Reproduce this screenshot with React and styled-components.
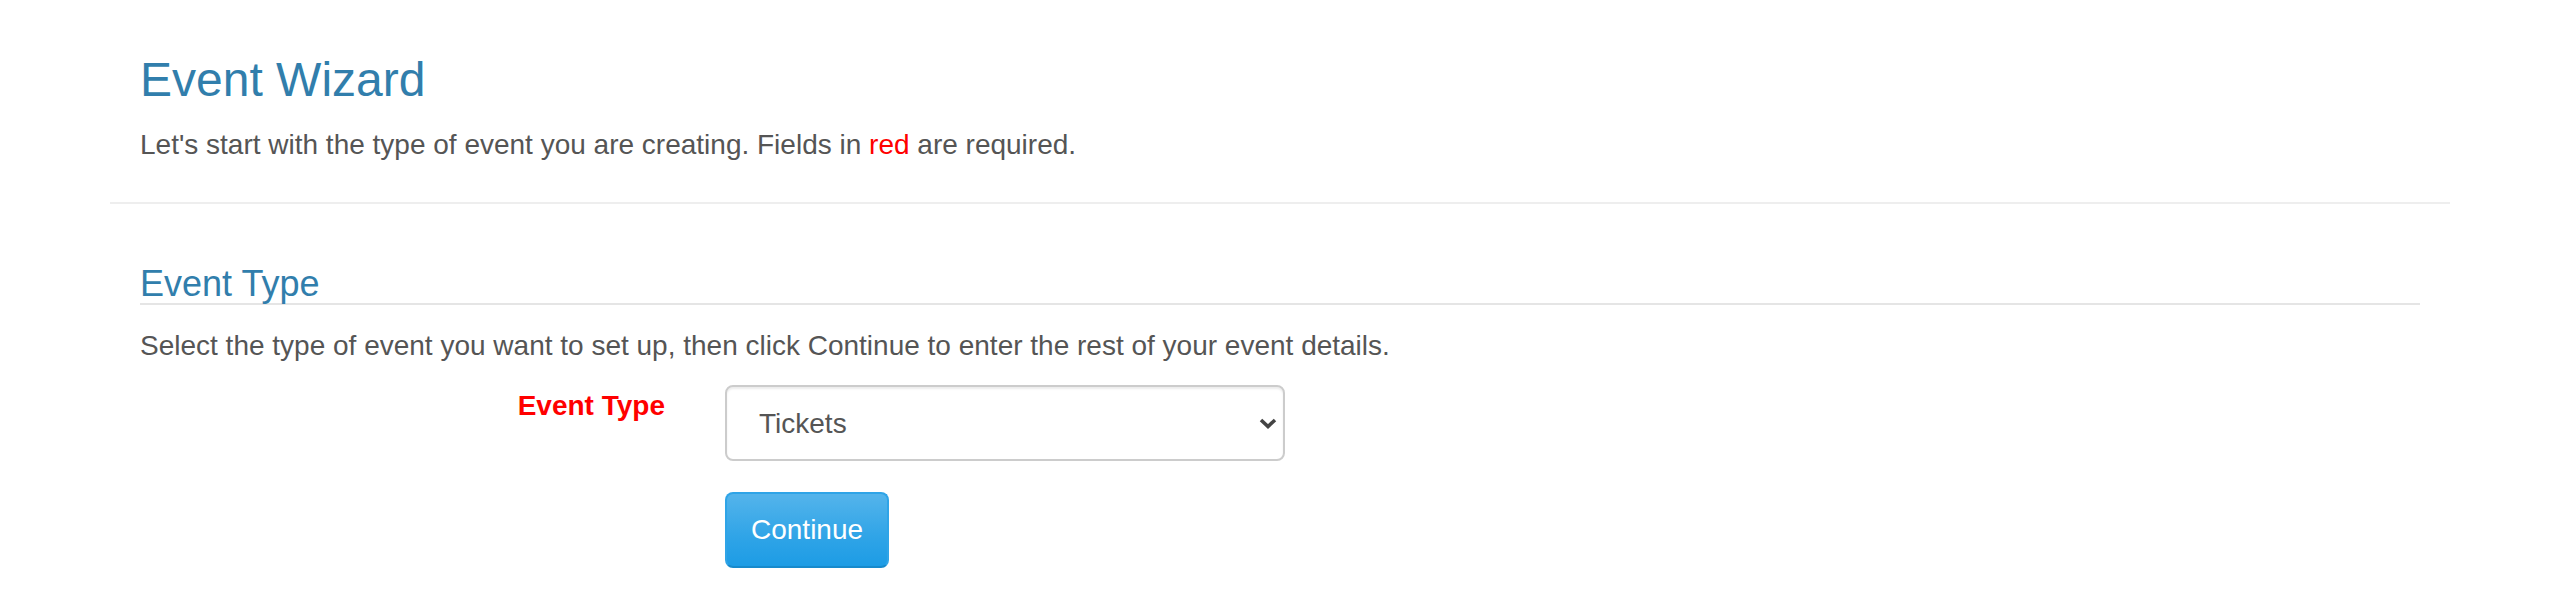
import React from 'react'
import styled, { createGlobalStyle } from 'styled-components'

const GlobalStyle = createGlobalStyle`
  html, body {
    margin: 0;
    padding: 0;
    background: #fff;
  }
  body {
    font-family: "Liberation Sans", Arial, Helvetica, sans-serif;
    font-size: 28px;
    line-height: 40px;
    color: #555;
  }
  * {
    box-sizing: border-box;
  }
`

const Container = styled.div`
  width: 2340px;
  margin: 0 auto;
  padding: 0 30px;
`

const Title = styled.h1`
  margin: 54px 0 0;
  font-size: 48px;
  line-height: 52.8px;
  font-weight: 400;
  color: #317eac;
`

const Lead = styled.p`
  margin: 18px 0 0;
`

const Required = styled.span`
  color: #ff0000;
`

const Divider = styled.hr`
  margin: 37px -30px 0;
  border: 0;
  border-top: 2px solid #eee;
  height: 0;
`

const Fieldset = styled.fieldset`
  margin: 60px 0 0;
  padding: 0;
  border: 0;
  min-width: 0;
`

const Legend = styled.legend`
  display: block;
  width: 100%;
  margin: 0;
  padding: 0;
  font-size: 36px;
  line-height: 39.6px;
  color: #317eac;
  border-bottom: 2px solid #e5e5e5;
`

const Help = styled.p`
  margin: 21px 0 0;
`

const FormRow = styled.div`
  display: flex;
  margin: ${p => p.$top || 0}px -30px 0;
`

const LabelCol = styled.div`
  flex: 0 0 585px;
  padding: 0 30px;
  text-align: right;
`

const ControlCol = styled.div`
  flex: 1;
  padding: 0 30px;
`

const Label = styled.label`
  display: block;
  padding-top: 1px;
  font-weight: 700;
  color: ${p => (p.$required ? '#ff0000' : '#555')};
`

const SelectWrap = styled.div`
  position: relative;
  width: 560px;
`

const Select = styled.select`
  display: block;
  width: 100%;
  height: 76px;
  padding: 0 60px 0 32px;
  font-family: inherit;
  font-size: 28px;
  color: #555;
  background: #fff;
  border: 2px solid #ccc;
  border-radius: 8px;
  box-shadow: inset 0 2px 2px rgba(0, 0, 0, 0.075);
  appearance: none;
  -webkit-appearance: none;
  outline: none;
`

const Chevron = styled.svg`
  position: absolute;
  right: 8px;
  top: 33px;
  width: 18px;
  height: 11px;
  pointer-events: none;
`

const Button = styled.button`
  height: 76px;
  padding: 0 24px;
  font-family: inherit;
  font-size: 28px;
  line-height: 40px;
  color: #fff;
  border: 2px solid #2fa4e7;
  border-bottom-color: #178acc;
  border-radius: 8px;
  background-image: linear-gradient(#54b4eb, #2fa4e7 60%, #1d9ce5);
  cursor: pointer;
`

const App = () => (
  <>
    <GlobalStyle />
    <Container>
      <Title>Event Wizard</Title>
      <Lead>
        Let's start with the type of event you are creating. Fields in <Required>red</Required> are required.
      </Lead>
      <Divider />
      <Fieldset>
        <Legend>Event Type</Legend>
        <Help>Select the type of event you want to set up, then click Continue to enter the rest of your event details.</Help>
        <FormRow $top={19}>
          <LabelCol>
            <Label $required htmlFor='eventType'>Event Type</Label>
          </LabelCol>
          <ControlCol>
            <SelectWrap>
              <Select id='eventType' defaultValue='tickets'>
                <option value='tickets'>Tickets</option>
                <option value='registration'>Registration</option>
                <option value='donation'>Donation</option>
              </Select>
              <Chevron viewBox='0 0 18 11'>
                <path d='M2 2 L9 8.5 L16 2' fill='none' stroke='#444' strokeWidth='3.6' strokeLinecap='butt' strokeLinejoin='miter' />
              </Chevron>
            </SelectWrap>
          </ControlCol>
        </FormRow>
        <FormRow $top={31}>
          <LabelCol />
          <ControlCol>
            <Button type='button'>Continue</Button>
          </ControlCol>
        </FormRow>
      </Fieldset>
    </Container>
  </>
)

export default App
